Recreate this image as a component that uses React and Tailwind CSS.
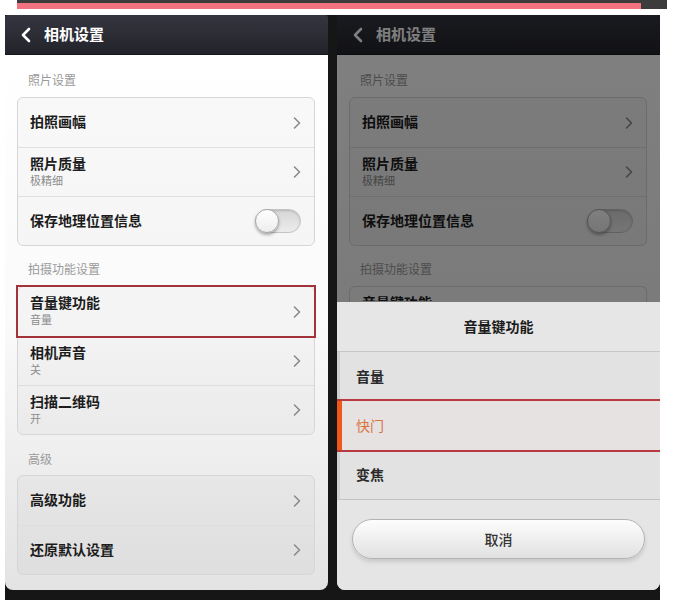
const Chevron = () => (
  <svg width="8" height="12" viewBox="0 0 8 12" className="shrink-0">
    <polyline points="1.5,1 6.5,6 1.5,11" fill="none" stroke="#8a8a8a" strokeWidth="1.6" strokeLinecap="round" strokeLinejoin="round" />
  </svg>
);

const Toggle = () => (
  <div className="relative w-[46px] h-[24px] rounded-full bg-linear-to-b from-[#d6d6d6] to-[#ececec] border border-[#c4c4c4] shadow-[inset_0_1px_2px_rgba(0,0,0,0.15)]">
    <div className="absolute -left-[1px] -top-[1px] w-[24px] h-[24px] rounded-full bg-linear-to-b from-white to-[#ededed] border border-[#a9a9a9] shadow-[0_2px_3px_rgba(0,0,0,0.3)]" />
  </div>
);

const Row = ({ title, sub, right, first, marked }) => (
  <div
    className={`h-[49px] flex items-center justify-between pl-[12px] pr-[13px] ${first ? "" : "border-t border-[#dedede]"} ${marked ? "ring-2 ring-[#a3333b] relative" : ""}`}
  >
    <div className="flex flex-col pb-[3px]">
      <span className="text-[14px] leading-[18px] font-bold text-[#1c1c1c]">{title}</span>
      {sub && <span className="mt-[1px] text-[11px] leading-[15px] text-[#8c8c8c]">{sub}</span>}
    </div>
    {right || <Chevron />}
  </div>
);

const Label = ({ children, className }) => (
  <div className={`pl-[23px] h-[16px] text-[12px] leading-[16px] text-[#9a9a9a] ${className}`}>{children}</div>
);

const Card = ({ children, className }) => (
  <div className={`mx-[12px] w-[298px] rounded-[6px] border border-[#d6d6d6] bg-black/[0.025] ${className}`}>
    {children}
  </div>
);

const Header = () => (
  <div className="h-[40px] shrink-0 flex items-center gap-[12px] pl-[15px] bg-linear-to-b from-[#34353f] to-[#23242b] border-b border-[#15161a]">
    <svg width="12" height="16" viewBox="0 0 12 16">
      <polyline points="9,2 3,8 9,14" fill="none" stroke="#ffffff" strokeWidth="2.6" strokeLinecap="round" strokeLinejoin="round" />
    </svg>
    <span className="text-[15px] font-bold text-white">相机设置</span>
  </div>
);

const PhotoSection = () => (
  <>
    <Label className="mt-[17px] mb-[9px]">照片设置</Label>
    <Card>
      <Row first title="拍照画幅" />
      <Row title="照片质量" sub="极精细" />
      <Row title="保存地理位置信息" right={<Toggle />} />
    </Card>
    <Label className="mt-[15px] mb-[9px]">拍摄功能设置</Label>
  </>
);

const SettingsPhone = () => (
  <div className="w-[323px] h-[575px] flex flex-col rounded-b-[8px] rounded-t-[3px] overflow-hidden">
    <Header />
    <div className="flex-1 bg-linear-to-b from-white via-[#fafafa] to-[#e3e3e3]">
      <PhotoSection />
      <Card>
        <Row first title="音量键功能" sub="音量" marked />
        <Row title="相机声音" sub="关" />
        <Row title="扫描二维码" sub="开" />
      </Card>
      <Label className="mt-[16px] mb-[8px]">高级</Label>
      <Card className="bg-black/[0.04] border-[#cdcdcd]">
        <Row first title="高级功能" />
        <Row title="还原默认设置" />
      </Card>
    </div>
  </div>
);

const DialogPhone = () => (
  <div className="w-[323px] h-[575px] flex flex-col rounded-b-[8px] rounded-t-[3px] overflow-hidden">
    <div className="relative h-[287px] shrink-0 flex flex-col overflow-hidden">
      <Header />
      <div className="flex-1 bg-linear-to-b from-white to-[#f6f6f6]">
        <PhotoSection />
        <div className="mx-[12px] w-[298px] h-[20px] rounded-t-[6px] border border-b-0 border-[#d6d6d6] pl-[12px] pt-[6px] overflow-hidden">
          <div className="h-[8px] overflow-hidden text-[14px] leading-[18px] font-bold text-[#1c1c1c]">音量键功能</div>
        </div>
      </div>
      <div className="absolute inset-0 bg-black/50" />
    </div>
    <div className="flex-1 flex flex-col bg-[#e2e2e2]">
      <div className="h-[50px] flex items-center justify-center bg-[#e6e6e6] border-b border-[#c6c6c6] text-[14px] font-bold text-[#1c1c1c]">
        音量键功能
      </div>
      <div className="h-[49px] flex items-center pl-[16px] border-l-[3px] border-[#cfcfcf] text-[14px] font-semibold text-[#2a2a2a]">
        音量
      </div>
      <div className="relative h-[49px] flex items-center pl-[14px] border-l-[5px] border-[#f0571b] bg-[#e6e2e2] ring-2 ring-[#b8393f] text-[14px] text-[#d9733e]">
        快门
      </div>
      <div className="h-[50px] flex items-center pl-[16px] border-l-[3px] border-[#cfcfcf] border-b border-b-[#c2c2c2] text-[14px] font-semibold text-[#2a2a2a]">
        变焦
      </div>
      <div className="flex-1 px-[15px] pt-[19px] bg-[#e5e5e5]">
        <div className="h-[40px] rounded-full border border-[#b4b4b4] bg-linear-to-b from-[#fdfdfd] to-[#e1e1e1] shadow-[0_3px_4px_rgba(0,0,0,0.12)] flex items-center justify-center text-[14px] font-medium text-[#333]">
          取消
        </div>
      </div>
    </div>
  </div>
);

export default function App() {
  return (
    <div className="w-[686px] h-[609px] bg-white overflow-hidden font-['Noto_Sans_CJK_SC',sans-serif]">
      <div className="ml-[17px] w-[650px] h-[9px] pt-[3px] bg-[#3c3c3c]">
        <div className="w-[624px] h-[6px] bg-[#f2737f]" />
      </div>
      <div className="mt-[6px] ml-[5px] w-[655px] h-[585px] flex gap-[9px] bg-[#161616] pb-[10px]">
        <SettingsPhone />
        <DialogPhone />
      </div>
    </div>
  );
}
